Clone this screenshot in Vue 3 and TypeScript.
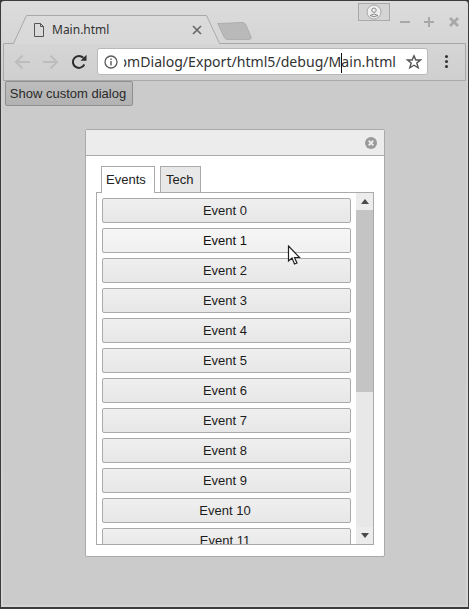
<script setup lang="ts">
const events = Array.from({ length: 12 }, (_, i) => `Event ${i}`)
</script>

<template>
  <div class="window">
    <header class="chrome">
      <div class="strip">
        <svg class="tab-shape" width="469" height="44" viewBox="0 0 469 44" aria-hidden="true">
          <path d="M3.5 43.5H13.5L26.5 15.5H206.5L219.5 43.5H466" fill="none" stroke="#a8a8a8" />
          <path d="M4 44H14L27 16H206L219 44Z" fill="#dedede" opacity="0.45" />
          <path d="M219 23.5Q217 22.5 218 24L224 37Q225 39.5 228 39.5H248Q252 39.5 251 37L246 25Q245 22.5 242 22.5Z" fill="#b9b9b9" stroke="#aeaeae" />
        </svg>
        <div class="tab-label">
          <svg width="12" height="16" viewBox="0 0 12 16" class="page-ico" aria-hidden="true">
            <path d="M1.5 1.5H7.5L10.5 4.5V14.5H1.5Z M7.5 1.5V4.5H10.5" fill="none" stroke="#555" />
          </svg>
          <span class="tab-title">Main.html</span>
          <svg width="10" height="10" viewBox="0 0 10 10" class="tab-close" aria-hidden="true">
            <path d="M1 1L9 9M9 1L1 9" stroke="#666" stroke-width="1.6" />
          </svg>
        </div>
        <div class="win-controls">
          <div class="profile">
            <svg width="16" height="16" viewBox="0 0 16 16" aria-hidden="true">
              <circle cx="8" cy="8" r="7" fill="#efefef" stroke="#a5a5a5" />
              <circle cx="8" cy="6.2" r="2.2" fill="none" stroke="#888" />
              <path d="M4 11.5Q8 8.5 12 11.5Q8 14 4 11.5Z" fill="none" stroke="#888" />
            </svg>
          </div>
          <svg class="wc" width="12" height="12" viewBox="0 0 12 12" aria-hidden="true"><path d="M0 7H10" stroke="#a8a8a8" stroke-width="2" /></svg>
          <svg class="wc" width="12" height="12" viewBox="0 0 12 12" aria-hidden="true"><path d="M0 7H10M5 2V12" stroke="#a8a8a8" stroke-width="2" /></svg>
          <svg class="wc" width="12" height="12" viewBox="0 0 12 12" aria-hidden="true"><path d="M2 3L10 11M10 3L2 11" stroke="#a8a8a8" stroke-width="2.6" /></svg>
        </div>
      </div>
      <div class="toolbar">
        <svg width="18" height="16" viewBox="0 0 18 16" class="nav" aria-hidden="true"><path d="M16 8H2M8.5 1.5L2 8L8.5 14.5" fill="none" stroke="#bdbdbd" stroke-width="2" /></svg>
        <svg width="18" height="16" viewBox="0 0 18 16" class="nav" aria-hidden="true"><path d="M1 8H15M8.5 1.5L15 8L8.5 14.5" fill="none" stroke="#bdbdbd" stroke-width="2" /></svg>
        <svg width="16" height="16" viewBox="0 0 16 16" class="reload" aria-hidden="true">
          <path d="M13.3 10.5A6 6 0 1 1 12.3 3.8" fill="none" stroke="#2e2e2e" stroke-width="2" />
          <path d="M9.5 6.8H15.5V0.8Z" fill="#2e2e2e" />
        </svg>
        <div class="omnibox">
          <svg width="14" height="14" viewBox="0 0 14 14" class="info" aria-hidden="true">
            <circle cx="7" cy="7" r="6" fill="none" stroke="#5a5a5a" stroke-width="1.3" />
            <path d="M7 6V10.5M7 3.4V5" stroke="#5a5a5a" stroke-width="1.4" />
          </svg>
          <div class="url"><span>CustomDialog/Export/html5/debug/Main.html</span></div>
          <i class="caret"></i>
          <svg width="16" height="16" viewBox="0 0 16 16" class="star" aria-hidden="true">
            <path d="M8 1.8L9.8 6H14.5L10.8 9L12.2 13.8L8 11.2L3.8 13.8L5.2 9L1.5 6H6.2Z" fill="none" stroke="#555" stroke-width="1.4" />
          </svg>
        </div>
        <div class="menu"><i></i><i></i><i></i></div>
      </div>
    </header>

    <main class="page">
      <button class="show">Show custom dialog</button>
      <section class="dialog">
        <div class="dlg-head">
          <svg width="12" height="12" viewBox="0 0 13 13" aria-hidden="true">
            <circle cx="6.5" cy="6.5" r="6.5" fill="#9a9a9a" />
            <path d="M4 4L9 9M9 4L4 9" stroke="#eee" stroke-width="2" />
          </svg>
        </div>
        <div class="dlg-body">
          <div class="tabs">
            <div class="t active">Events</div>
            <div class="t tech">Tech</div>
          </div>
          <div class="panel">
            <div class="list">
              <button v-for="(e, i) in events" :key="e" class="ev" :class="{ hover: i === 1 }">{{ e }}</button>
            </div>
            <div class="scrollbar">
              <div class="sb-btn"><i class="up"></i></div>
              <div class="thumb"></div>
              <div class="track"></div>
              <div class="sb-btn end"><i class="down"></i></div>
            </div>
          </div>
        </div>
      </section>
      <svg class="pointer" width="14" height="21" viewBox="0 0 14 21" aria-hidden="true">
        <path d="M1.5 1V16L5 13L7.5 19L10 18L7.5 12.5H12.5Z" fill="#fff" stroke="#222" stroke-width="1.2" />
      </svg>
    </main>
  </div>
</template>

<style>
html, body { margin: 0; background: #3a3a3a; }
</style>

<style scoped>
.window {
  width: 469px;
  height: 609px;
  box-sizing: border-box;
  border: 1px solid #3c3c3c;
  border-bottom-width: 2px;
  border-radius: 4px 4px 0 0;
  padding: 0 2px 2px 2px;
  background: linear-gradient(#dcdcdc, #cfcfcf 80px, #d4d4d4);
  display: flex;
  flex-direction: column;
  overflow: hidden;
  font-family: "Liberation Sans", Arial, sans-serif;
  position: relative;
}
.chrome { flex: none; }
.strip {
  height: 43px;
  display: flex;
  align-items: flex-start;
  position: relative;
}
.tab-shape { position: absolute; left: -3px; top: -1px; }
.tab-label {
  position: relative;
  width: 169px;
  margin-left: 30px;
  margin-top: 19px;
  height: 20px;
  display: flex;
  align-items: center;
}
.page-ico { margin-right: 7px; flex: none; }
.tab-title { font: 12px "Noto Sans", sans-serif; color: #333; flex: 1; margin-top: -1px; }
.tab-close { flex: none; }
.win-controls {
  position: relative;
  margin-left: auto;
  margin-right: 6px;
  display: flex;
  align-items: flex-start;
  gap: 12px;
  margin-top: 2px;
}
.profile {
  width: 30px;
  height: 16px;
  border: 1px solid #a9a9a9;
  background: #d4d4d4;
  display: flex;
  justify-content: center;
  margin-right: -2px;
}
.wc { margin-top: 12px; }
.toolbar {
  height: 37px;
  box-sizing: border-box;
  border: 1px solid #a9a9a9;
  border-width: 0 1px 1px;
  display: flex;
  align-items: center;
  padding: 0 0 2px 10px;
}
.nav { margin-right: 10px; margin-top: 2px; }
.reload { margin-left: 1px; margin-right: 10px; margin-top: 2px; }
.omnibox {
  width: 331px;
  height: 27px;
  box-sizing: border-box;
  background: #fff;
  border: 1px solid #b9b9b9;
  border-radius: 3px;
  display: flex;
  align-items: center;
  padding-left: 6px;
  position: relative;
}
.info { flex: none; margin-right: 6px; margin-top: 1px; }
.url {
  width: 272px;
  overflow: hidden;
  display: flex;
  justify-content: flex-end;
  white-space: nowrap;
  font: 14.1px "Noto Sans", sans-serif;
  color: #333;
  flex: none;
}
.caret {
  position: absolute;
  left: 243px;
  top: 4px;
  width: 1px;
  height: 20px;
  background: #111;
}
.star { margin-left: 10px; flex: none; margin-top: 1px; }
.menu {
  display: flex;
  flex-direction: column;
  gap: 2px;
  margin-left: 17px;
  margin-top: 1px;
}
.menu i { width: 3px; height: 3px; border-radius: 50%; background: #333; display: block; }
.page {
  flex: 1;
  background: #cbcbcb;
  position: relative;
  min-height: 0;
  padding: 0;
  overflow: hidden;
}
.show {
  display: block;
  margin: 0 0 0 2px;
  width: 128px;
  height: 25px;
  box-sizing: border-box;
  padding: 0 2px 0 0;
  border: 1px solid #8f8f8f;
  border-radius: 2px;
  background: linear-gradient(#bdbdbd, #b2b2b2);
  font: 13px "Liberation Sans", Arial, sans-serif;
  color: #2a2a2a;
}
.dialog {
  width: 300px;
  height: 428px;
  margin: 23px 0 0 82px;
  box-sizing: border-box;
  border: 1px solid #aaa;
  border-radius: 2px;
  background: #fff;
  display: flex;
  flex-direction: column;
}
.dlg-head {
  height: 26px;
  flex: none;
  box-sizing: border-box;
  background: #ececec;
  border-bottom: 1px solid #aaa;
  display: flex;
  align-items: center;
  justify-content: flex-end;
  padding-right: 7px;
}
.dlg-body { padding: 10px 10px 11px; flex: 1; display: flex; flex-direction: column; min-height: 0; }
.tabs { display: flex; gap: 5px; padding-left: 5px; height: 27px; position: relative; z-index: 1; flex: none; }
.t {
  box-sizing: border-box;
  height: 26px;
  border: 1px solid #aaa;
  border-bottom: 0;
  background: #e8e8e8;
  padding: 0 4px;
  font-size: 13px;
  line-height: 26px;
  color: #222;
}
.t.active { background: #fff; height: 27px; width: 54px; }
.t.tech { width: 41px; padding: 0 5px; }
.panel {
  flex: 1;
  min-height: 0;
  margin-top: -1px;
  border: 1px solid #aaa;
  display: flex;
  overflow: hidden;
}
.list {
  flex: 1;
  min-width: 0;
  padding: 5px 5px 0;
  display: flex;
  flex-direction: column;
  gap: 5px;
  overflow: hidden;
}
.ev {
  flex: none;
  height: 25px;
  box-sizing: border-box;
  padding: 0 3px 0 0;
  border: 1px solid #aaa;
  border-radius: 2px;
  background: linear-gradient(#efefef, #e7e7e7);
  font: 13px "Liberation Sans", Arial, sans-serif;
  color: #1c1c1c;
}
.ev.hover { background: linear-gradient(#f6f6f6, #f0f0f0); color: #111; }
.scrollbar {
  width: 17px;
  flex: none;
  background: #e8e8e8;
  display: flex;
  flex-direction: column;
}
.sb-btn {
  height: 17px;
  flex: none;
  display: flex;
  align-items: center;
  justify-content: center;
  background: #ececec;
}
.thumb { height: 182px; flex: none; background: #c4c4c4; }
.track { flex: 1; }
.up, .down { width: 0; height: 0; border-left: 4px solid transparent; border-right: 4px solid transparent; }
.up { border-bottom: 5px solid #4a4a4a; }
.down { border-top: 5px solid #4a4a4a; }
.pointer { position: absolute; left: 284px; top: 164px; }
</style>
